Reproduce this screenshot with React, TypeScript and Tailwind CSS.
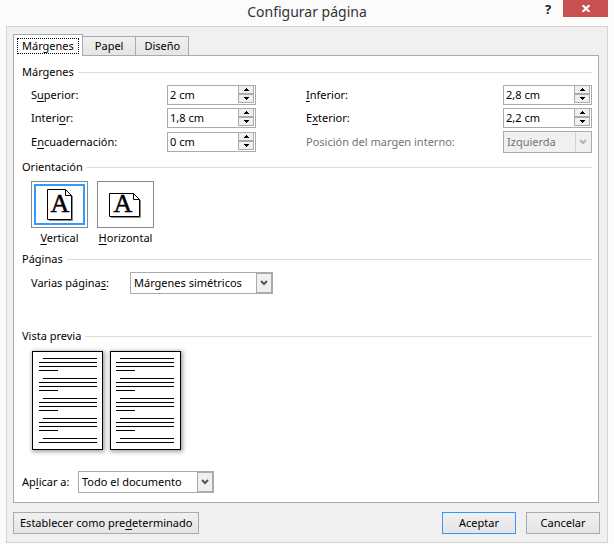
import { useState } from "react";
import type { ReactNode } from "react";
import clsx from "clsx";

// "S_uperior" underlines the letter that follows the underscore
const Mnemonic = ({ text }: { text: string }) => {
  const [before, after] = text.split("_");
  if (after === undefined) return <>{before}</>;
  return (
    <>
      {before}
      <span className="underline underline-offset-2">{after[0]}</span>
      {after.slice(1)}
    </>
  );
};

const Heading = ({ children }: { children: ReactNode }) => (
  <div className="flex items-center gap-1">
    <h2 className="whitespace-nowrap">{children}</h2>
    <div className="h-px flex-1 bg-[#dcdcdc]" />
  </div>
);

const Spinner = ({ id, initial }: { id: string; initial: string }) => {
  const [value, setValue] = useState(initial);

  const step = (delta: number) => {
    const next = Math.max(0, parseFloat(value.replace(",", ".")) + delta);
    setValue(`${String(Math.round(next * 10) / 10).replace(".", ",")} cm`);
  };

  return (
    <div className="flex h-5 w-[89px] border border-[#ababab] bg-white pr-px pb-px">
      <input
        id={id}
        type="text"
        value={value}
        onChange={(e) => setValue(e.target.value)}
        className="w-full min-w-0 flex-1 pl-0.5 outline-none"
      />
      <div className="flex w-4 flex-none flex-col">
        <button
          type="button"
          aria-label="Aumentar"
          onClick={() => step(0.1)}
          className="flex flex-1 items-center justify-center border border-t-0 border-[#ababab] bg-[#f0f0f0]"
        >
          <svg width="5" height="3" shapeRendering="crispEdges">
            <path d="M2 0h1v1h1v1h1v1H0V2h1V1h1z" />
          </svg>
        </button>
        <button
          type="button"
          aria-label="Disminuir"
          onClick={() => step(-0.1)}
          className="flex flex-1 items-center justify-center border border-[#ababab] bg-[#f0f0f0]"
        >
          <svg width="5" height="3" shapeRendering="crispEdges">
            <path d="M0 0h5v1H4v1H3v1H2V2H1V1H0z" />
          </svg>
        </button>
      </div>
    </div>
  );
};

type DropdownProps = {
  id: string;
  options: string[];
  disabled?: boolean;
  className?: string;
};

const Dropdown = ({ id, options, disabled, className }: DropdownProps) => (
  <div className={clsx("relative h-[22px]", className)}>
    <select
      id={id}
      disabled={disabled}
      className={clsx(
        "h-full w-full appearance-none border border-[#ababab] pr-5 pl-[3px] opacity-100",
        disabled ? "bg-[#f0f0f0] text-[#737373]" : "bg-white text-black"
      )}
    >
      {options.map((option) => (
        <option key={option}>{option}</option>
      ))}
    </select>
    <span
      className={clsx(
        "pointer-events-none absolute inset-y-px right-px flex w-4 items-center justify-center border bg-[#f0f0f0]",
        disabled
          ? "border-y-transparent border-r-transparent border-l-[#d0d0d0] text-[#b4b4b4]"
          : "border-[#ababab] text-[#555]"
      )}
    >
      <svg width="8" height="6" viewBox="0 0 8 6" fill="none" stroke="currentColor" strokeWidth="2">
        <path d="M1 1l3 3 3-3" />
      </svg>
    </span>
  </div>
);

const PortraitIcon = () => (
  <svg width="25" height="31" className="overflow-visible">
    <path d="M25.5 7v24.5H2" fill="none" stroke="#888" />
    <path d="M.5.5h18l6 6v24H.5z" fill="#fff" stroke="#000" />
    <path d="M18.5.5v6h6" fill="none" stroke="#000" />
    <text
      x="13"
      y="23"
      textAnchor="middle"
      stroke="#000"
      strokeWidth="0.5"
      className="font-['Liberation_Serif',serif] text-[26px]"
    >
      A
    </text>
  </svg>
);

const LandscapeIcon = () => (
  <svg width="33" height="23" className="overflow-visible">
    <path d="M31.5 7v17.5H2" fill="none" stroke="#888" />
    <path d="M.5.5h24l6 6v17H.5z" fill="#fff" stroke="#000" />
    <path d="M24.5.5v6h6" fill="none" stroke="#000" />
    <text
      x="14"
      y="19"
      textAnchor="middle"
      stroke="#000"
      strokeWidth="0.5"
      className="font-['Liberation_Serif',serif] text-[26px]"
    >
      A
    </text>
  </svg>
);

type OrientationProps = {
  label: string;
  checked: boolean;
  onSelect: () => void;
  children: ReactNode;
};

const Orientation = ({ label, checked, onSelect, children }: OrientationProps) => (
  <label className="flex w-[57px] flex-col items-center gap-0.5">
    <input type="radio" name="orientation" checked={checked} onChange={onSelect} className="sr-only" />
    <span className="flex h-[47px] w-full border border-[#84888f] bg-white p-0.5">
      <span
        className={clsx(
          "flex flex-1 items-center justify-center border-2",
          checked ? "border-[#3399ff]" : "border-transparent"
        )}
      >
        {children}
      </span>
    </span>
    <span>
      <Mnemonic text={label} />
    </span>
  </label>
);

const PREVIEW_ROWS = Array.from({ length: 18 }, (_, i) => i);

const PagePreview = ({ left }: { left: number }) => (
  <svg
    width="71"
    height="99"
    className="bg-white shadow-[1px_1px_4px_1px_rgba(0,0,0,0.35)]"
    shapeRendering="crispEdges"
  >
    <rect x="0.5" y="0.5" width="70" height="98" fill="none" stroke="#000" />
    {PREVIEW_ROWS.map((i) => {
      const line = i % 4;
      const x = line === 0 ? left + 4 : left;
      const end = line === 3 ? left + 19 : left + 58;
      const y = 7 + Math.floor(i / 4) * 20 + line * 4;
      return <rect key={i} x={x} y={y} width={end - x} height="1" />;
    })}
  </svg>
);

const TABS = ["Márgenes", "Papel", "Diseño"];

const LEFT_FIELDS = [
  { id: "top", label: "S_uperior:", value: "2 cm" },
  { id: "inside", label: "Interi_or:", value: "1,8 cm" },
  { id: "gutter", label: "E_ncuadernación:", value: "0 cm" },
];

const RIGHT_FIELDS = [
  { id: "bottom", label: "_Inferior:", value: "2,8 cm" },
  { id: "outside", label: "E_xterior:", value: "2,2 cm" },
];

export default function App() {
  const [tab, setTab] = useState("Márgenes");
  const [orientation, setOrientation] = useState("vertical");

  return (
    <div className="bg-[#fbfbfb] px-1.5 pb-px font-['Noto_Sans','Open_Sans',sans-serif] text-[11px] leading-4 text-black">
      <header className="grid h-[26px] grid-cols-[1fr_auto_1fr] items-start">
        <h1 className="col-start-2 text-sm leading-6 text-[#333]">Configurar página</h1>
        <div className="flex items-start justify-end">
          <button type="button" aria-label="Ayuda" className="w-[30px] text-[13px] leading-[18px] font-bold text-[#222]">
            ?
          </button>
          <button
            type="button"
            aria-label="Cerrar"
            className="flex h-[17px] w-[45px] items-center justify-center bg-[#c75050]"
          >
            <svg width="8" height="7" viewBox="0 0 8 7" stroke="#fff" strokeWidth="2">
              <path d="M.5 0l7 7M7.5 0l-7 7" />
            </svg>
          </button>
        </div>
      </header>

      <main className="border border-[#d4d4d4] bg-[#f0f0f0] pt-[7px] pb-2">
        <div role="tablist" className="ml-1.5 flex items-end">
          {TABS.map((name) => (
            <button
              key={name}
              type="button"
              role="tab"
              aria-selected={tab === name}
              onClick={() => setTab(name)}
              className={clsx(
                "border border-b-0 border-[#ababab]",
                tab === name
                  ? "relative z-10 -mb-px h-[22px] bg-white p-[3px]"
                  : "-ml-px h-[19px] bg-linear-to-b from-[#f0f0f0] to-[#e5e5e5] px-3 last:px-2"
              )}
            >
              {tab === name ? (
                <span className="block border border-dotted border-black px-1 leading-[14px]">{name}</span>
              ) : (
                name
              )}
            </button>
          ))}
        </div>

        <div className="mr-2 ml-1.5 border border-[#ababab] bg-white pt-2 pr-1.5 pb-[9px] pl-2">
          <Heading>Márgenes</Heading>
          <div className="mt-[5px] flex gap-[50px] pl-[9px]">
            <div className="flex flex-col gap-[3px]">
              {LEFT_FIELDS.map((field) => (
                <div key={field.id} className="flex items-center last:h-[22px]">
                  <label htmlFor={field.id} className="w-[136px]">
                    <Mnemonic text={field.label} />
                  </label>
                  <Spinner id={field.id} initial={field.value} />
                </div>
              ))}
            </div>
            <div className="flex flex-1 flex-col gap-[3px]">
              {RIGHT_FIELDS.map((field) => (
                <div key={field.id} className="flex items-center justify-between">
                  <label htmlFor={field.id}>
                    <Mnemonic text={field.label} />
                  </label>
                  <Spinner id={field.id} initial={field.value} />
                </div>
              ))}
              <div className="flex items-center justify-between">
                <label htmlFor="gutter-position" className="text-[#737373]">
                  Posición del margen interno:
                </label>
                <Dropdown id="gutter-position" options={["Izquierda", "Superior"]} disabled className="w-[89px]" />
              </div>
            </div>
          </div>

          <div className="mt-1.5">
            <Heading>Orientación</Heading>
          </div>
          <div className="mt-1.5 flex gap-[9px] pl-[9px]">
            <Orientation
              label="_Vertical"
              checked={orientation === "vertical"}
              onSelect={() => setOrientation("vertical")}
            >
              <PortraitIcon />
            </Orientation>
            <Orientation
              label="_Horizontal"
              checked={orientation === "horizontal"}
              onSelect={() => setOrientation("horizontal")}
            >
              <LandscapeIcon />
            </Orientation>
          </div>

          <div className="mt-[5px]">
            <Heading>Páginas</Heading>
          </div>
          <div className="mt-[5px] flex items-center pl-[9px]">
            <label htmlFor="multiple-pages" className="w-[99px]">
              <Mnemonic text="Varias página_s:" />
            </label>
            <Dropdown
              id="multiple-pages"
              options={["Márgenes simétricos", "Normal", "Dos páginas por hoja", "Libro plegado"]}
              className="w-[143px]"
            />
          </div>

          <div className="mt-[34px]">
            <Heading>Vista previa</Heading>
          </div>
          <div className="mt-[7px] flex gap-[7px] pl-2.5">
            <PagePreview left={7} />
            <PagePreview left={6} />
          </div>

          <div className="mt-[21px] flex items-center">
            <label htmlFor="apply-to" className="w-14">
              <Mnemonic text="Ap_licar a:" />
            </label>
            <Dropdown
              id="apply-to"
              options={["Todo el documento", "De aquí en adelante"]}
              className="w-[136px]"
            />
          </div>
        </div>

        <footer className="mt-[9px] mr-[7px] ml-1.5 flex gap-2.5">
          <button
            type="button"
            className="mr-auto h-[22px] border border-[#ababab] bg-linear-to-b from-[#f0f0f0] to-[#e5e5e5] px-1.5"
          >
            <Mnemonic text="Establecer como pre_determinado" />
          </button>
          <button
            type="button"
            className="h-[22px] w-[74px] border border-[#3399ff] bg-linear-to-b from-[#f0f0f0] to-[#e5e5e5]"
          >
            Aceptar
          </button>
          <button
            type="button"
            className="h-[22px] w-[74px] border border-[#ababab] bg-linear-to-b from-[#f0f0f0] to-[#e5e5e5]"
          >
            Cancelar
          </button>
        </footer>
      </main>
    </div>
  );
}
